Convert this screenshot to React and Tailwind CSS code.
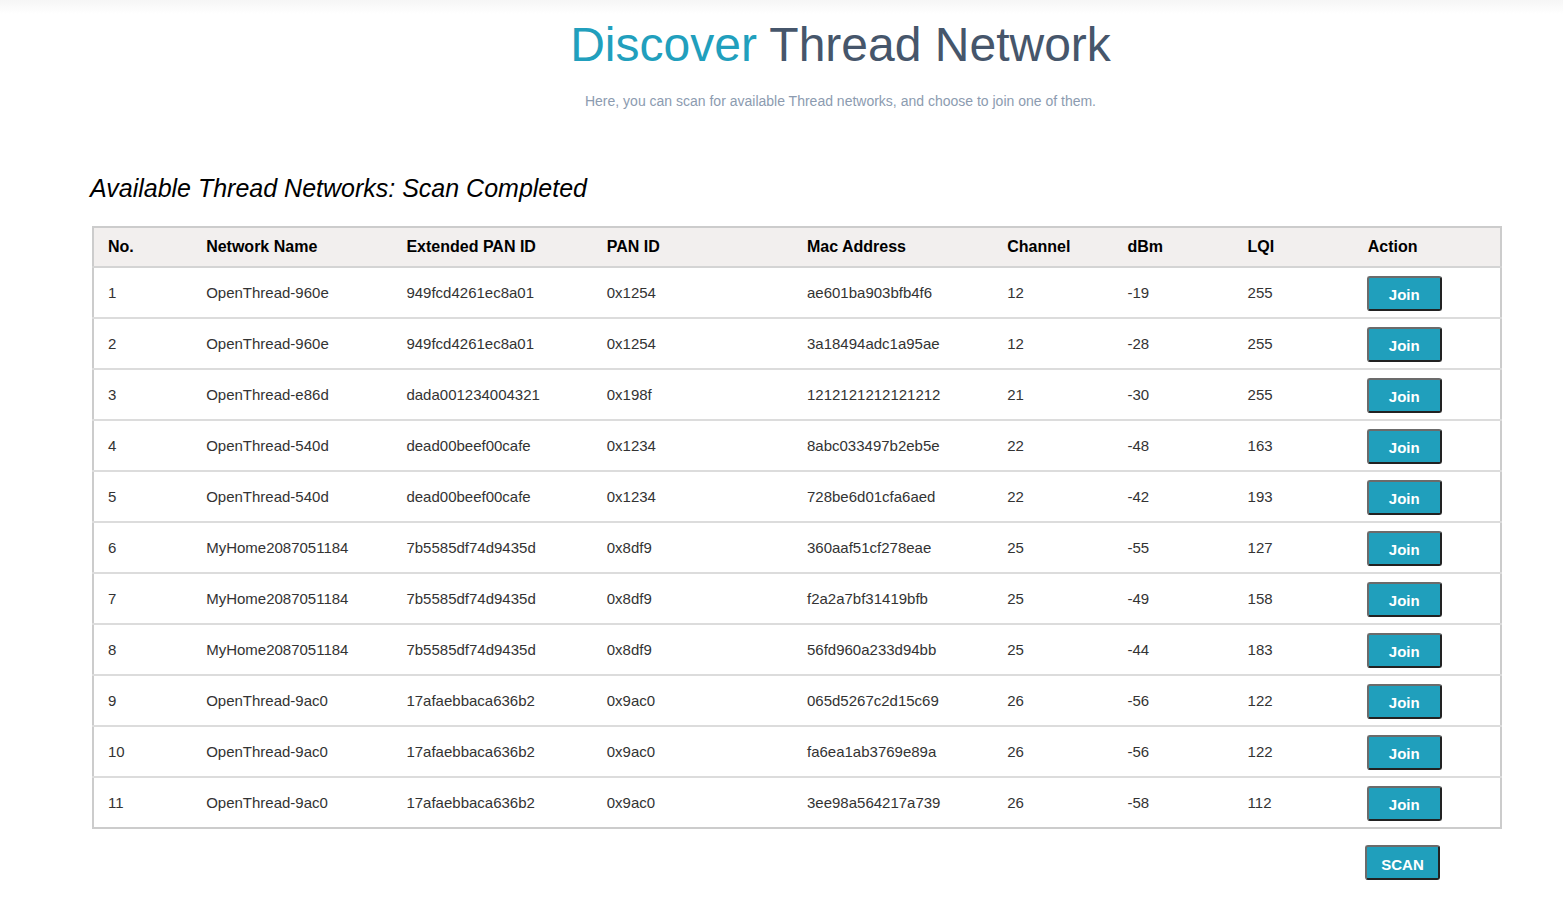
import React from 'react';

const networks = [
    ['1', 'OpenThread-960e', '949fcd4261ec8a01', '0x1254', 'ae601ba903bfb4f6', '12', '-19', '255'],
    ['2', 'OpenThread-960e', '949fcd4261ec8a01', '0x1254', '3a18494adc1a95ae', '12', '-28', '255'],
    ['3', 'OpenThread-e86d', 'dada001234004321', '0x198f', '1212121212121212', '21', '-30', '255'],
    ['4', 'OpenThread-540d', 'dead00beef00cafe', '0x1234', '8abc033497b2eb5e', '22', '-48', '163'],
    ['5', 'OpenThread-540d', 'dead00beef00cafe', '0x1234', '728be6d01cfa6aed', '22', '-42', '193'],
    ['6', 'MyHome2087051184', '7b5585df74d9435d', '0x8df9', '360aaf51cf278eae', '25', '-55', '127'],
    ['7', 'MyHome2087051184', '7b5585df74d9435d', '0x8df9', 'f2a2a7bf31419bfb', '25', '-49', '158'],
    ['8', 'MyHome2087051184', '7b5585df74d9435d', '0x8df9', '56fd960a233d94bb', '25', '-44', '183'],
    ['9', 'OpenThread-9ac0', '17afaebbaca636b2', '0x9ac0', '065d5267c2d15c69', '26', '-56', '122'],
    ['10', 'OpenThread-9ac0', '17afaebbaca636b2', '0x9ac0', 'fa6ea1ab3769e89a', '26', '-56', '122'],
    ['11', 'OpenThread-9ac0', '17afaebbaca636b2', '0x9ac0', '3ee98a564217a739', '26', '-58', '112'],
];

const headers = ['No.', 'Network Name', 'Extended PAN ID', 'PAN ID', 'Mac Address', 'Channel', 'dBm', 'LQI', 'Action'];
const widths = ['w-[99px]', 'w-[200px]', 'w-[200px]', 'w-[200px]', 'w-[200px]', 'w-[120px]', 'w-[120px]', 'w-[120px]', 'w-[147px]'];

const ActionButton = ({ children }) => (
    <button className="w-[75px] h-[35px] pt-[5px] rounded-[3px] bg-[#209fbc] text-white font-bold text-[15px] border-2 border-t-[#6b6b6b] border-l-[#6b6b6b] border-r-[#222] border-b-[#222] cursor-pointer">
        {children}
    </button>
);

const App = () => {
    return (
        <div className="min-h-screen bg-white" style={{ fontFamily: '"Liberation Sans", Arial, sans-serif' }}>
            <div className="h-[14px] bg-gradient-to-b from-[#f6f6f6] to-white"></div>

            {/* Header */}
            <div className="pl-[118px] text-center">
                <h1 className="text-[48px] leading-[60px] mt-[1px] text-[#46566b]">
                    <span className="text-[#219fbd]">Discover</span> Thread Network
                </h1>
                <p className="mt-[16px] text-[14px] text-[#8c9bb0]">Here, you can scan for available Thread networks, and choose to join one of them.</p>
            </div>

            {/* Networks */}
            <div className="pl-[90px] pr-[62px] mt-[61px]">
                <h2 className="italic text-[25px] text-black leading-[30px]">Available Thread Networks: Scan Completed</h2>

                <table className="mt-[23px] ml-[2px] w-[1410px] border-2 border-[#cccccc] border-collapse table-fixed text-left">
                    <thead>
                        <tr className="bg-[#f2efee] h-[40px] border-b-2 border-[#d4d4d4]">
                            {headers.map((h, i) => (
                                <th key={h} className={`${widths[i]} pl-[14px] text-[16px] font-bold text-black`}>{h}</th>
                            ))}
                        </tr>
                    </thead>
                    <tbody>
                        {networks.map((row, r) => (
                            <tr key={row[0]} className={`h-[51px] ${r < networks.length - 1 ? 'border-b-2 border-[#dcdcdc]' : ''}`}>
                                {row.map((cell, i) => (
                                    <td key={i} className="pl-[14px] pt-[2px] text-[15px] text-[#333]">{cell}</td>
                                ))}
                                <td className="pl-[13px] pt-[1px]">
                                    <ActionButton>Join</ActionButton>
                                </td>
                            </tr>
                        ))}
                    </tbody>
                </table>

                <div className="flex justify-end pr-[61px] mt-[16px]">
                    <ActionButton>SCAN</ActionButton>
                </div>
            </div>
        </div>
    );
};

export default App;
